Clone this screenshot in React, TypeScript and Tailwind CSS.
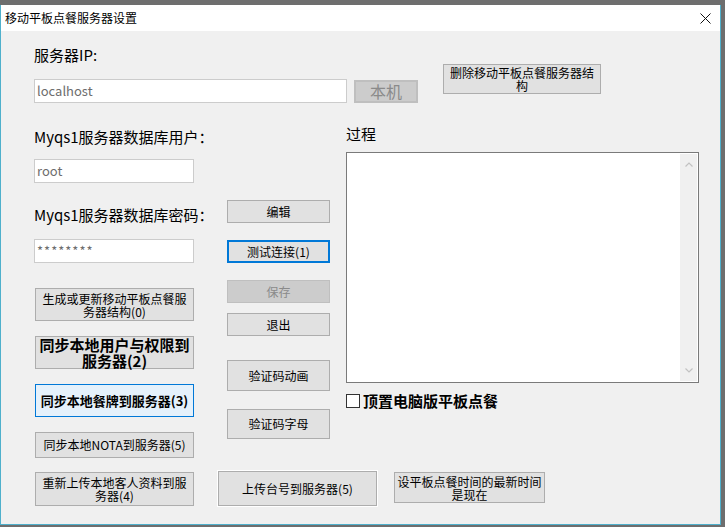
import React from "react";

const FONT = { fontFamily: '"Noto Sans CJK SC", "Noto Sans", sans-serif' };

function Btn({
  className = "",
  children,
  disabled = false,
}: {
  className?: string;
  children: React.ReactNode;
  disabled?: boolean;
}) {
  return (
    <div
      className={`flex items-center justify-center text-center border whitespace-nowrap ${
        disabled
          ? "bg-[#cccccc] border-[#bfbfbf] text-[#8a8a8a]"
          : "bg-[#e1e1e1] border-[#adadad] text-black"
      } ${className}`}
    >
      {children}
    </div>
  );
}

function Field({ value, className = "" }: { value: string; className?: string }) {
  return (
    <div
      className={`h-[24px] bg-white border border-[#cccccc] flex items-center pl-[2px] text-[13px] text-[#6d6d6d] ${className}`}
    >
      {value}
    </div>
  );
}

export default function App() {
  return (
    <div className="w-[725px] h-[527px] bg-[#6e6e6e] overflow-hidden" style={FONT}>
      <div className="mt-[5px] w-[721px] h-[520px] border-l border-r border-b border-[#4fb0cc] flex flex-col">
        {/* title bar */}
        <div className="h-[26px] bg-white flex items-center justify-between pl-[4px] pr-[9px] shrink-0">
          <span className="text-[12px] text-black leading-none">移动平板点餐服务器设置</span>
          <svg width="11" height="11" viewBox="0 0 11 11">
            <path d="M0.5 0.5 L10.5 10.5 M10.5 0.5 L0.5 10.5" stroke="#111" strokeWidth="1" />
          </svg>
        </div>

        <div className="flex-1 bg-[#f0f0f0] pl-[33px] flex flex-col">
          {/* server ip row */}
          <div className="h-[72px] flex shrink-0">
            <div className="w-[384px] flex flex-col">
              <div className="mt-[14px] h-[20px] leading-[20px] text-[15px] text-black">服务器IP:</div>
              <div className="mt-[14px] flex items-center gap-[7px]">
                <Field value="localhost" className="w-[313px]" />
                <Btn disabled className="w-[64px] h-[23px] text-[16px] border-2 border-[#bdbdbd]">
                  本机
                </Btn>
              </div>
            </div>
            <Btn className="ml-[25px] mt-[33px] w-[158px] h-[30px] text-[12px] leading-[13px] flex-col">
              <span>删除移动平板点餐服务器结</span>
              <span>构</span>
            </Btn>
          </div>

          {/* main columns */}
          <div className="h-[357px] flex shrink-0">
            <div className="w-[160px] flex flex-col">
              <div className="mt-[24px] h-[20px] leading-[20px] text-[15px] text-black whitespace-nowrap">
                Myqs1服务器数据库用户：
              </div>
              <Field value="root" className="mt-[12px] w-[160px]" />
              <div className="mt-[22px] h-[20px] leading-[20px] text-[15px] text-black whitespace-nowrap">
                Myqs1服务器数据库密码：
              </div>
              <Field value="********" className="mt-[14px] w-[160px] tracking-[1px]" />
              <Btn className="ml-[1px] mt-[25px] w-[159px] h-[33px] text-[12px] leading-[13px] flex-col">
                <span>生成或更新移动平板点餐服</span>
                <span>务器结构(0)</span>
              </Btn>
              <Btn className="ml-[1px] mt-[15px] w-[159px] h-[33px] text-[15px] leading-[16px] font-bold flex-col">
                <span>同步本地用户与权限到</span>
                <span>服务器(2)</span>
              </Btn>
              <Btn className="ml-[1px] mt-[15px] w-[159px] h-[33px] text-[13px] font-bold !bg-[#e5f1fb] !border-[#0078d7]">
                同步本地餐牌到服务器(3)
              </Btn>
              <Btn className="ml-[1px] mt-[15px] w-[159px] h-[26px] text-[12px]">同步本地NOTA到服务器(5)</Btn>
            </div>

            <div className="ml-[33px] w-[103px] flex flex-col">
              <Btn className="mt-[97px] h-[23px] text-[12px]">编辑</Btn>
              <Btn className="mt-[17px] h-[23px] text-[12px] border-2 !border-[#0078d7]">测试连接(1)</Btn>
              <Btn disabled className="mt-[17px] h-[23px] text-[12px]">
                保存
              </Btn>
              <Btn className="mt-[10px] h-[23px] text-[12px]">退出</Btn>
              <Btn className="mt-[24px] h-[31px] text-[12px]">验证码动画</Btn>
              <Btn className="mt-[18px] h-[30px] text-[12px]">验证码字母</Btn>
            </div>

            <div className="ml-[16px] w-[353px] flex flex-col">
              <div className="mt-[21px] h-[20px] leading-[20px] text-[15px] text-black">过程</div>
              <div className="mt-[8px] h-[231px] bg-white border border-[#7a7a7a] flex justify-end p-[1px]">
                <div className="w-[17px] bg-[#f0f0f0] flex flex-col items-center justify-between py-[8px]">
                  <svg width="8" height="5" viewBox="0 0 8 5">
                    <path d="M0.5 4.5 L4 1 L7.5 4.5" stroke="#c2c2c2" fill="none" strokeWidth="1.2" />
                  </svg>
                  <svg width="8" height="5" viewBox="0 0 8 5">
                    <path d="M0.5 0.5 L4 4 L7.5 0.5" stroke="#c2c2c2" fill="none" strokeWidth="1.2" />
                  </svg>
                </div>
              </div>
              <div className="mt-[10px] flex items-center">
                <div className="w-[14px] h-[14px] bg-white border border-[#333333]" />
                <span className="ml-[3px] text-[15px] font-bold text-black leading-[16px]">顶置电脑版平板点餐</span>
              </div>
            </div>
          </div>

          {/* bottom row */}
          <div className="mt-[11px] flex items-start">
            <Btn className="ml-[1px] mt-[1px] w-[159px] h-[34px] text-[12px] leading-[13px] flex-col">
              <span>重新上传本地客人资料到服</span>
              <span>务器(4)</span>
            </Btn>
            <div className="ml-[24px] outline outline-1 outline-white">
              <Btn className="w-[159px] h-[35px] text-[12px]">上传台号到服务器(5)</Btn>
            </div>
            <Btn className="ml-[17px] mt-[1px] w-[151px] h-[31px] text-[12px] leading-[13px] flex-col">
              <span>设平板点餐时间的最新时间</span>
              <span>是现在</span>
            </Btn>
          </div>
        </div>
      </div>
    </div>
  );
}
